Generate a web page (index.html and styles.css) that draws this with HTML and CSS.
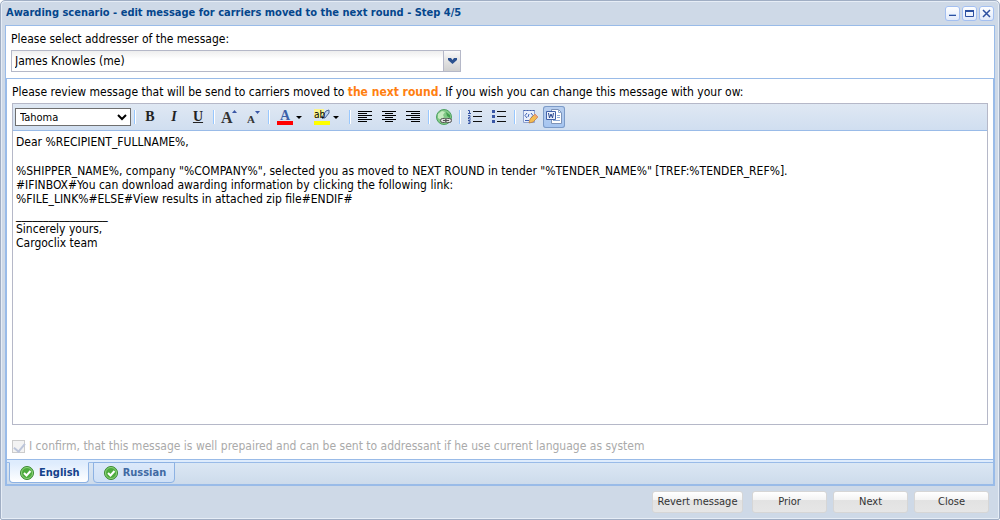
FILE: index.html
```html
<!DOCTYPE html>
<html lang="en">
<head>
<meta charset="utf-8">
<title>Awarding scenario</title>
<link rel="stylesheet" href="styles.css">
</head>
<body>
<main class="window">
  <header class="titlebar">
    <h1 class="title">Awarding scenario - edit message for carriers moved to the next round - Step 4/5</h1>
    <button class="tool" type="button" aria-label="Minimize"><svg width="15" height="15"><path d="M4 8.500h7" stroke="#a9c3e8"/><path d="M4 9.500h7" stroke="#2c50a0"/></svg></button>
    <button class="tool" type="button" aria-label="Maximize"><svg width="15" height="15"><path d="M3.500 4v6.500h8V4M3 4.500h9M3 5.500h9" fill="none" stroke="#2c50a0"/></svg></button>
    <button class="tool" type="button" aria-label="Close"><svg width="15" height="15"><path d="M4 4l7 7M11 4l-7 7" stroke="#2c50a0" stroke-width="1.500"/></svg></button>
  </header>

  <section class="sender">
    <label for="addresser">Please select addresser of the message:</label>
    <div class="combo">
      <input id="addresser" type="text" value="James Knowles (me)">
      <button type="button" aria-label="Show list"><svg width="9" height="6"><path d="M0 0h3l1.500 2L6 0h3v2L4.500 6 0 2z" fill="#2b518f"/></svg></button>
    </div>
  </section>

  <section class="message">
    <div class="message-body">
      <p class="intro">Please review message that will be send to carriers moved to <strong>the next round</strong>. If you wish you can change this message with your ow:</p>
      <div class="editor">
        <div class="toolbar" role="toolbar" aria-label="Formatting">
          <select class="font-name" aria-label="Font"><option>Tahoma</option></select>
          <span class="sep"></span>
          <button class="tb bold" type="button" aria-label="Bold">B</button>
          <button class="tb italic" type="button" aria-label="Italic">I</button>
          <button class="tb underline" type="button" aria-label="Underline">U</button>
          <span class="sep"></span>
          <button class="tb" type="button" aria-label="Grow text"><svg width="16" height="16"><text class="glyph" x="0" y="14" font-size="16">A</text><path d="M11 4h5l-2.500-3z" fill="#3956a5"/></svg></button>
          <button class="tb" type="button" aria-label="Shrink text"><svg width="16" height="16"><text class="glyph" x="2" y="14" font-size="11">A</text><path d="M10 2h5l-2.500 3z" fill="#3956a5"/></svg></button>
          <span class="sep"></span>
          <button class="tb menu" type="button" aria-label="Font color"><svg width="16" height="16"><path d="M0 12h16v4H0z" fill="#f00"/><text class="glyph blue" x="3" y="11" font-size="14">A</text></svg><i class="caret"></i></button>
          <button class="tb menu" type="button" aria-label="Highlight color"><svg width="16" height="16"><path d="M0 0h10v9H0z" fill="#fbf58c"/><path d="M8 8l4-6 3-1v3l-4 5z" fill="#bdd2f0" stroke="#4e6794"/><path d="M8 7l3 2-3 1z" fill="#435b83"/><path d="M0 12h16v4H0z" fill="#ff0"/><text class="ab" x="0" y="9">ab</text></svg><i class="caret"></i></button>
          <span class="sep"></span>
          <button class="tb" type="button" aria-label="Align left"><svg width="16" height="16"><path d="M1 2.500h14M1 4.500h9M1 6.500h14M1 8.500h9M1 10.500h14M1 12.500h9" stroke="#000"/></svg></button>
          <button class="tb" type="button" aria-label="Align center"><svg width="16" height="16"><path d="M1 2.500h14M4 4.500h8M1 6.500h14M4 8.500h8M1 10.500h14M4 12.500h8" stroke="#000"/></svg></button>
          <button class="tb" type="button" aria-label="Align right"><svg width="16" height="16"><path d="M1 2.500h14M6 4.500h9M1 6.500h14M6 8.500h9M1 10.500h14M6 12.500h9" stroke="#000"/></svg></button>
          <span class="sep"></span>
          <button class="tb" type="button" aria-label="Hyperlink"><svg width="16" height="16"><circle cx="8" cy="8" r="7.500" fill="#82c886" stroke="#4fa263"/><path d="M2 5l4-3 3 1-2 3 1 2-3 3-3-2z" fill="#c5ebc0"/><path d="M10 3l4 3v3l-3-2z" fill="#3f9e4d"/><rect x="4.500" y="9.500" width="6" height="4" rx="2" fill="#ddd" stroke="#555"/><rect x="9.500" y="9.500" width="6" height="4" rx="2" fill="#ddd" stroke="#555"/><path d="M7 11.500h6" stroke="#555"/></svg></button>
          <span class="sep"></span>
          <button class="tb" type="button" aria-label="Numbered list"><svg width="16" height="16"><path d="M6 2.500h9M6 7.500h9M6 12.500h9" stroke="#111"/><path d="M1 1.500h1.500v3M1 4.500h3M1 6.500h2v2H1.500v1.500H4M1 11.500h2v3H1M1.500 13h1.500" fill="none" stroke="#3956a5"/></svg></button>
          <button class="tb" type="button" aria-label="Bullet list"><svg width="16" height="16"><path d="M6 2.500h9M6 7.500h9M6 12.500h9" stroke="#111"/><path d="M1 1h3v3H1zM1 6h3v3H1zM1 11h3v3H1z" fill="#3956a5"/></svg></button>
          <span class="sep"></span>
          <button class="tb" type="button" aria-label="Source edit"><svg width="16" height="16"><path d="M1.500 1.500h11v12h-11z" fill="#e9effb" stroke="#8fa2cf"/><path d="M1.500 1.500h11" stroke="#3f5eae" stroke-dasharray="2 1"/><path d="M5 4L3 6.500 5 9M9 4l2 2.500L9 9M7 5l-1 3M3 11.500h4" fill="none" stroke="#4163b5"/><path d="M7 14l1-4 5-5 3 3-5 5z" fill="#f4bd52" stroke="#b9783b" stroke-width=".7"/><path d="M13 5l3 3-1 1-3-3z" fill="#e89b82"/></svg></button>
          <button class="tb pressed" type="button" aria-label="Clean Word text" aria-pressed="true"><svg width="16" height="16"><path d="M5.500 .500h7l3 3v11h-10z" fill="#fff" stroke="#7d93b8"/><path d="M12.500 .500v3h3M11 6.500h3M11 8.500h3M7 11.500h7" fill="none" stroke="#8eabd6"/><path d="M.5 2.500h9v8h-9z" fill="#eef3fd" stroke="#4262a8"/><path d="M2.500 4l1 5L5 5l1.500 4 1-5" fill="none" stroke="#29478f"/></svg></button>
        </div>
        <div class="text" contenteditable="true" role="textbox" aria-multiline="true" aria-label="Message" spellcheck="false">
          <p>Dear %RECIPIENT_FULLNAME%,</p>
          <p class="details">%SHIPPER_NAME%, company "%COMPANY%", selected you as moved to NEXT ROUND in tender "%TENDER_NAME%" [TREF:%TENDER_REF%].<br>#IFINBOX#You can download awarding information by clicking the following link:<br>%FILE_LINK%#ELSE#View results in attached zip file#ENDIF#</p>
          <p class="signature">_________________<br>Sincerely yours,<br>Cargoclix team</p>
        </div>
      </div>
      <label class="confirm"><input type="checkbox" checked disabled><span>I confirm, that this message is well prepaired and can be sent to addressant if he use current language as system</span></label>
    </div>
    <div class="tabs" role="tablist">
      <button class="tab active" type="button" role="tab" aria-selected="true"><svg width="14" height="14"><circle cx="7" cy="7" r="6.500" fill="#4dab3e" stroke="#3d8b35"/><circle cx="7" cy="7" r="5.500" fill="none" stroke="#8fd27c"/><path d="M4 7l2.500 2.500L10.500 5" fill="none" stroke="#fff" stroke-width="2"/></svg>English</button>
      <button class="tab" type="button" role="tab" aria-selected="false"><svg width="14" height="14"><circle cx="7" cy="7" r="6.500" fill="#4dab3e" stroke="#3d8b35"/><circle cx="7" cy="7" r="5.500" fill="none" stroke="#8fd27c"/><path d="M4 7l2.500 2.500L10.500 5" fill="none" stroke="#fff" stroke-width="2"/></svg>Russian</button>
    </div>
  </section>

  <footer class="actions">
    <button class="revert" type="button">Revert message</button>
    <button type="button">Prior</button>
    <button type="button">Next</button>
    <button type="button">Close</button>
  </footer>
</main>
</body>
</html>
```
FILE: styles.css
```css
* { box-sizing: border-box; }

body {
  margin: 0;
  background: #fff;
  color: #000;
  font: 12px/14px Tahoma, "DejaVu Sans Condensed", sans-serif;
}

h1, p { margin: 0; }

button, input, select { font: inherit; color: inherit; margin: 0; }

svg { display: block; flex: none; overflow: visible; }

.window {
  display: flex;
  flex-direction: column;
  min-height: 100vh;
  padding: 0 4px 5px;
  border: 1px solid #a0aec4;
  border-radius: 5px 5px 2px 2px;
  background: #ced9e7;
  box-shadow: inset 0 0 0 1px #e6edf6;
}

.titlebar {
  display: flex;
  align-items: center;
  gap: 2px;
  height: 24px;
  padding: 0 1px;
}

.title {
  flex: 1;
  font-size: 11px;
  font-weight: bold;
  color: #04468c;
}

.tool {
  width: 15px;
  height: 15px;
  padding: 0;
  border: 0;
  border-radius: 3px;
  background: linear-gradient(#fff, #dfe9fa);
  box-shadow: inset 0 0 0 1px #a3bff0;
}

.sender {
  padding: 6px 5px;
  border: 1px solid #99bbe8;
  border-bottom: 0;
  background: #fff;
}

.combo {
  display: flex;
  width: 450px;
  height: 22px;
  margin-top: 4px;
  border: 1px solid #b5b8c8;
}

.combo input {
  flex: 1;
  min-width: 0;
  padding: 0 3px;
  border: 0;
  background: linear-gradient(#eee, #fff 8px);
}

.combo button {
  display: flex;
  align-items: center;
  justify-content: center;
  width: 17px;
  padding: 0;
  border: 0;
  border-left: 1px solid #b5b8c8;
  background: linear-gradient(#fafafa, #e3e3e3 50%, #d0d0d0);
}

.message {
  flex: 1;
  display: flex;
  flex-direction: column;
  border: 2px solid #99bbe8;
  border-top-width: 1px;
  background: #fff;
}

.message-body {
  flex: 1;
  display: flex;
  flex-direction: column;
  padding: 6px 5px;
}

.intro strong { color: #ff8010; }

.editor {
  flex: 1;
  display: flex;
  flex-direction: column;
  margin-top: 4px;
  border: 1px solid #b5b8c8;
}

.toolbar {
  display: flex;
  align-items: center;
  height: 27px;
  padding-left: 2px;
  border-bottom: 1px solid #99bbe8;
  background: linear-gradient(#dfe8f3, #d0def0);
}

.font-name {
  width: 116px;
  height: 18px;
  padding: 0;
  border: 1px solid #6f6f6f;
  background: #fff;
  font-size: 11px;
}

.sep {
  width: 7px;
  height: 14px;
  border-left: 3px solid transparent;
  background: linear-gradient(#98c8ff, #98c8ff) 0 0 / 1px 100% no-repeat, linear-gradient(#fff, #fff) 1px 0 / 1px 100% no-repeat;
  background-origin: padding-box;
}

.tb {
  display: flex;
  align-items: center;
  justify-content: center;
  width: 22px;
  height: 22px;
  margin: 0 1px;
  padding: 0;
  border: 0;
  border-radius: 3px;
  background: none;
  color: #222;
  font: 14px/16px "Liberation Serif", serif;
}

.bold { font-weight: bold; }
.italic { font-style: italic; font-weight: bold; }
.underline { font-weight: bold; text-decoration: underline; }

.menu {
  width: 35px;
  justify-content: flex-start;
  gap: 3px;
  padding-left: 4px;
}

.caret {
  border: 3px solid transparent;
  border-top-color: #000;
  border-bottom: 0;
}

.pressed {
  background: linear-gradient(#b9cfee, #a5c5f1);
  box-shadow: inset 0 0 0 1px #7c9bc8;
}

.glyph { font-family: "Liberation Serif", serif; font-weight: bold; fill: #333; }
.blue { fill: #3c5fa8; }
.ab { font: 10px "DejaVu Sans Condensed", sans-serif; }

.text { flex: 1; padding: 4px 3px; outline: 0; }
.details { margin-top: 15px; }
.signature { margin-top: 2px; }

.confirm {
  display: flex;
  align-items: center;
  gap: 4px;
  margin-top: 14px;
  color: #aaa;
}

.confirm input {
  appearance: none;
  width: 13px;
  height: 13px;
  border: 1px solid #ccc;
  background: #f3f3f3;
  position: relative;
}

.confirm input:checked::after {
  content: "";
  position: absolute;
  left: 3px;
  top: 0;
  width: 5px;
  height: 9px;
  border: solid #bcc5da;
  border-width: 0 2px 2px 0;
  transform: rotate(40deg);
}

.tabs {
  display: flex;
  align-items: flex-start;
  gap: 4px;
  height: 25px;
  padding: 2px 2px 0;
  border-top: 1px solid #99bbe8;
  background: linear-gradient(#deecfd 2px, #99bbe8 2px, #99bbe8 3px, #dbe7f4 3px, #cddbeb);
}

.tab {
  display: flex;
  align-items: center;
  gap: 5px;
  height: 21px;
  padding: 0 8px 0 10px;
  border: 1px solid #8db2e3;
  border-radius: 0 0 4px 4px;
  background: linear-gradient(#dce9fa, #cfe0f6);
  font-size: 11px;
  font-weight: bold;
  color: #416aa3;
}

.tab.active {
  border-top-color: #deecfd;
  background: linear-gradient(#deecfd, #fff);
  color: #15428b;
}

.actions {
  display: flex;
  justify-content: flex-end;
  gap: 6px;
  padding: 5px 6px 1px 0;
}

.actions button {
  width: 75px;
  height: 22px;
  padding: 0;
  border: 1px solid #d6d6d6;
  border-radius: 3px;
  background: linear-gradient(#fff, #f3f3f3 40%, #e2e2e2 40%, #e6e6e6);
  color: #333;
  font-size: 11px;
}

.actions .revert { width: 91px; margin-right: 3px; }
```
